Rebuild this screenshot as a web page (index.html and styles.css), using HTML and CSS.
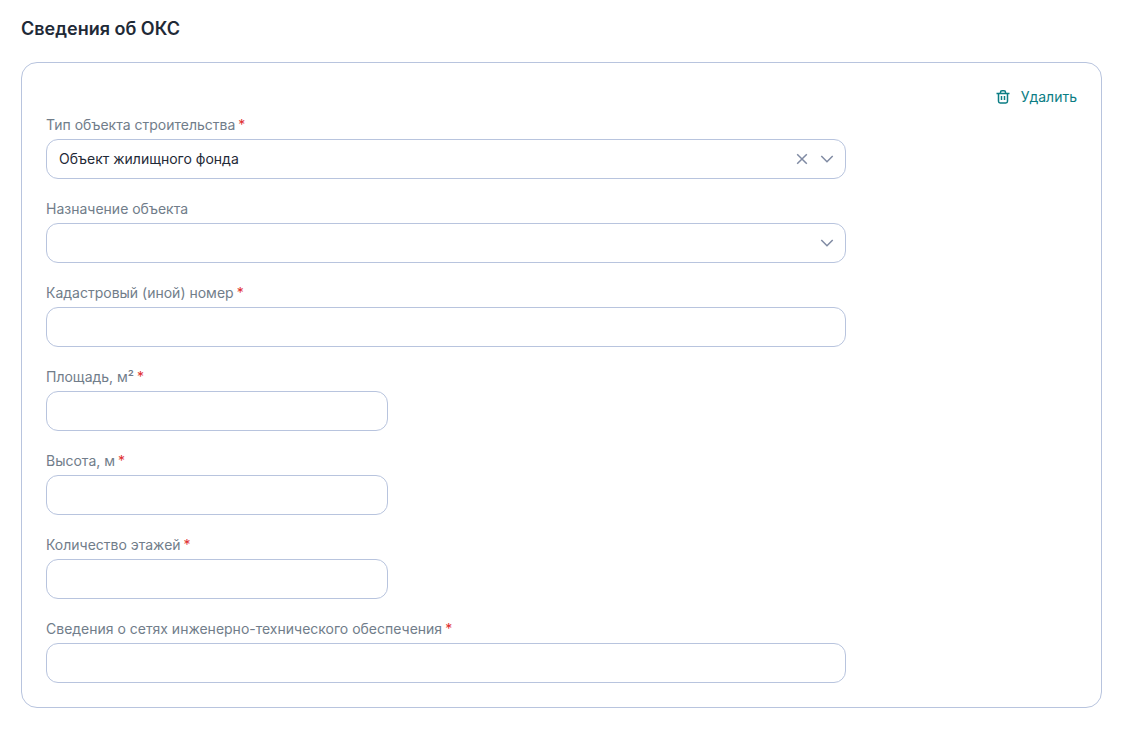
FILE: index.html
```html
<!DOCTYPE html>
<html lang="ru">
<head>
<meta charset="utf-8">
<meta name="viewport" content="width=device-width, initial-scale=1">
<title>Сведения об ОКС</title>
<link rel="stylesheet" href="styles.css">
</head>
<body>
<main class="page">
  <h1 class="title">Сведения об ОКС</h1>
  <form class="card">
    <button type="button" class="remove">
      <svg class="remove-icon" viewBox="0 0 16 16" aria-hidden="true"><path d="M1.500 4.500h13M5.500 4V3.200q0-1.500 1.500-1.500h2q1.500 0 1.500 1.500V4M3.500 4.500v7.800q0 1.700 1.700 1.700h5.600q1.700 0 1.700-1.700V4.500M6.500 7v4M9.500 7v4"/></svg>
      <span>Удалить</span>
    </button>
    <div class="fields">
      <div class="field">
        <label class="label" for="type">Тип объекта строительства<span class="req">*</span></label>
        <div class="control">
          <select id="type" class="input"><option>Объект жилищного фонда</option></select>
          <div class="tools">
            <button type="button" class="clear" aria-label="Очистить"><svg class="tool-icon" viewBox="0 0 16 16"><path d="M3.200 3.200l9.600 9.600M12.800 3.200l-9.600 9.600"/></svg></button>
            <svg class="tool-icon" viewBox="0 0 16 16" aria-hidden="true"><path d="M2.300 5l5.700 5.700 5.700-5.700"/></svg>
          </div>
        </div>
      </div>
      <div class="field">
        <label class="label" for="purpose">Назначение объекта</label>
        <div class="control">
          <select id="purpose" class="input"><option></option></select>
          <div class="tools">
            <svg class="tool-icon" viewBox="0 0 16 16" aria-hidden="true"><path d="M2.300 5l5.700 5.700 5.700-5.700"/></svg>
          </div>
        </div>
      </div>
      <div class="field">
        <label class="label" for="cadastre">Кадастровый (иной) номер<span class="req">*</span></label>
        <input id="cadastre" class="input" type="text">
      </div>
      <div class="field short">
        <label class="label" for="area">Площадь, м²<span class="req">*</span></label>
        <input id="area" class="input" type="text">
      </div>
      <div class="field short">
        <label class="label" for="height">Высота, м<span class="req">*</span></label>
        <input id="height" class="input" type="text">
      </div>
      <div class="field short">
        <label class="label" for="floors">Количество этажей<span class="req">*</span></label>
        <input id="floors" class="input" type="text">
      </div>
      <div class="field">
        <label class="label" for="networks">Сведения о сетях инженерно-технического обеспечения<span class="req">*</span></label>
        <input id="networks" class="input" type="text">
      </div>
    </div>
  </form>
</main>
</body>
</html>
```
FILE: styles.css
```css
* { box-sizing: border-box; }
body { margin: 0; background: #fff; color: #1f2a37; font: 14px/20px Inter, "Noto Sans", sans-serif; }
.page { padding: 17px 23px 21px 21px; }
.title { margin: 0 0 21px; font-size: 18px; line-height: 24px; font-weight: 600; }
.card { display: flex; flex-direction: column; padding: 24px; border: 1px solid #b8c4de; border-radius: 16px; }
.remove { display: flex; align-items: center; gap: 10px; align-self: flex-end; padding: 0; border: 0; background: none; color: #0b7d84; font: inherit; cursor: pointer; }
.remove-icon { width: 16px; height: 16px; fill: none; stroke: currentColor; stroke-width: 1.5; }
.fields { display: flex; flex-direction: column; gap: 20px; max-width: 800px; margin-top: 8px; }
.field { display: flex; flex-direction: column; gap: 4px; }
.short { max-width: 342px; }
.label { color: #717d8a; }
.req { margin-left: 3px; color: #e0302f; }
.control { position: relative; }
.input { display: block; width: 100%; height: 40px; padding: 0 12px; border: 1px solid #b8c4de; border-radius: 12px; background: #fff; color: #1f2a37; font: inherit; appearance: none; outline: none; }
.tools { position: absolute; top: 0; bottom: 0; right: 11px; display: flex; align-items: center; gap: 9px; pointer-events: none; }
.clear { display: flex; padding: 0; border: 0; background: none; pointer-events: auto; cursor: pointer; }
.tool-icon { width: 16px; height: 16px; fill: none; stroke: #7f8aa3; stroke-width: 1.5; }
```
